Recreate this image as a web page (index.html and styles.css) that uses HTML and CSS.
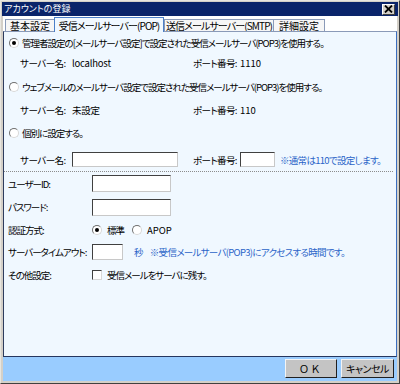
FILE: index.html
```html
<!DOCTYPE html>
<html lang="ja">
<head>
<meta charset="utf-8">
<title>アカウントの登録</title>
<link rel="stylesheet" href="styles.css">
</head>
<body>
<div class="window">
  <div class="titlebar">
    <span class="title">アカウントの登録</span>
    <span class="close"><svg width="9" height="8" viewBox="0 0 9 8"><path d="M1 0.5 L8 7.5 M8 0.5 L1 7.5" stroke="#000" stroke-width="1.8" fill="none"/></svg></span>
  </div>
  <div class="frame">
    <div class="tabs">
      <span class="tab t1">基本設定</span>
      <span class="tab t2 active">受信メールサーバー(POP)</span>
      <span class="tab t3">送信メールサーバー(SMTP)</span>
      <span class="tab t4">詳細設定</span>
    </div>
    <div class="panel">
      <div class="row r1"><span class="radio checked"></span><span>管理者設定の[メールサーバ設定]で設定された受信メールサーバ(POP3)を使用する。</span></div>
      <div class="sub r2"><span class="sl">サーバー名:</span><span class="sv">localhost</span><span class="pl">ポート番号:</span><span class="pv">1110</span></div>
      <div class="row r3"><span class="radio"></span><span>ウェブメールのメールサーバ設定で設定された受信メールサーバ(POP3)を使用する。</span></div>
      <div class="sub r4"><span class="sl">サーバー名:</span><span class="sv">未設定</span><span class="pl">ポート番号:</span><span class="pv">110</span></div>
      <div class="row r5"><span class="radio"></span><span>個別に設定する。</span></div>
      <div class="sub r6"><span class="sl">サーバー名:</span><span class="sv"><span class="input w-server"></span></span><span class="pl">ポート番号:</span><span class="input w-port"></span><span class="note">※通常は110で設定します。</span></div>
      <div class="sep"></div>
      <div class="frow r7"><span class="fl">ユーザーID:</span><span class="input w-user"></span></div>
      <div class="frow r8"><span class="fl">パスワード:</span><span class="input w-user"></span></div>
      <div class="frow r9"><span class="fl">認証方式:</span><span class="radio checked"></span><span class="opt">標準</span><span class="radio"></span><span class="opt latin">APOP</span></div>
      <div class="frow r10"><span class="fl">サーバータイムアウト:</span><span class="input w-time"></span><span class="note sec">秒</span><span class="note">※受信メールサーバ(POP3)にアクセスする時間です。</span></div>
      <div class="frow r11"><span class="fl">その他設定:</span><span class="check"></span><span class="opt">受信メールをサーバに残す。</span></div>
    </div>
    <div class="footer">
      <span class="btn ok">ＯＫ</span>
      <span class="btn">キャンセル</span>
    </div>
  </div>
</div>
</body>
</html>
```
FILE: styles.css
```css
html, body {
  margin: 0;
  padding: 0;
  background: #d4d0c8;
}
body {
  font-family: "Noto Sans CJK JP", sans-serif;
  font-size: 9.5px;
  letter-spacing: -1px;
  font-feature-settings: "palt";
  color: #000;
  white-space: nowrap;
}
.window {
  width: 400px;
  height: 384px;
  box-sizing: border-box;
  border: 1px solid;
  border-color: #e8e6e0 #404040 #404040 #e8e6e0;
  padding: 1px 1px 2px 1px;
  display: flex;
  flex-direction: column;
  background: #d4d0c8;
}
.titlebar {
  height: 14px;
  background: #0a246a;
  display: flex;
  align-items: center;
  justify-content: space-between;
  padding: 0 3px 0 2px;
  color: #fff;
}
.title {
  font-size: 9px;
  line-height: 12px;
  letter-spacing: 0;
}
.close {
  width: 11px;
  height: 9px;
  background: #d4d0c8;
  border: 1px solid;
  border-color: #fff #404040 #404040 #fff;
  display: flex;
  align-items: center;
  justify-content: center;
}
.frame {
  flex: 1;
  margin: 0 1px;
  display: flex;
  flex-direction: column;
  background: #fff;
}
.tabs {
  height: 15px;
  display: flex;
  align-items: flex-end;
  padding-left: 2px;
  background: #fff;
}
.tab {
  flex: none;
  height: 11px;
  line-height: 11px;
  border: 1px solid #8a9ab8;
  border-bottom: none;
  background: #f6f6f6;
  text-align: center;
  margin-right: -1px;
  font-size: 10px;
  letter-spacing: -0.9px;
}
.tab.active {
  height: 14px;
  line-height: 16px;
  background: #f0f8ff;
  border-color: #4b7fc8;
  position: relative;
  z-index: 1;
  margin-bottom: -1px;
}
.t1 { width: 48px; letter-spacing: 0; }
.t2 { width: 108px; }
.t3 { width: 108px; margin-left: 1px; }
.t4 { width: 50px; letter-spacing: 0; }
.panel {
  height: 326px;
  box-sizing: border-box;
  background: #f0f8ff;
  border: 1px solid;
  border-color: #8a9ab8 #3a6ec0 #26365e #2e3c5e;
  display: flex;
  flex-direction: column;
}
.row, .sub, .frow {
  display: flex;
  align-items: center;
}
.row > *, .sub > *, .frow > * { flex: none; }
.row { padding-left: 5px; }
.row .radio { margin-right: 3px; }
.r1 { height: 22px; }
.r2 { height: 18px; }
.r3 { height: 30px; }
.r4 { height: 16px; }
.r5 { height: 30px; }
.r6 { height: 23px; }
.sub { padding-left: 16px; }
.sl { width: 52px; letter-spacing: -0.5px; }
.sv { width: 121px; display: flex; letter-spacing: -0.2px; }
.pl { width: 47px; letter-spacing: -0.6px; }
.pv { letter-spacing: 0; }
.latin { letter-spacing: 0; }
.sep {
  border-top: 1px dotted #8c8c8c;
  margin: 0 3px 0 0;
  height: 0;
}
.frow { padding-left: 4px; }
.fl { width: 84px; }
.r7 { height: 23px; }
.r8 { height: 24px; }
.r9 { height: 21px; }
.r10 { height: 24px; }
.r11 { height: 22px; }
.radio {
  width: 8px;
  height: 8px;
  border-radius: 50%;
  background: #fff;
  border: 1px solid;
  border-color: #707070 #d8d8d8 #d8d8d8 #707070;
  display: inline-flex;
  align-items: center;
  justify-content: center;
}
.radio.checked::after {
  content: "";
  width: 4px;
  height: 4px;
  border-radius: 50%;
  background: #000;
}
.check {
  width: 8px;
  height: 8px;
  background: #fff;
  border: 1px solid;
  border-color: #404040 #d8d8d8 #d8d8d8 #404040;
}
.opt { margin-left: 5px; margin-right: 8px; }
.input {
  display: block;
  background: #fff;
  border: 1px solid;
  border-color: #404040 #c8c8c8 #c8c8c8 #404040;
  box-sizing: border-box;
}
.w-server { width: 106px; height: 15px; }
.w-port { width: 35px; height: 15px; }
.w-user { width: 79px; height: 17px; }
.w-time { width: 31px; height: 16px; }
.note {
  color: #2a64c8;
  margin-left: 5px;
  letter-spacing: -0.7px;
}
.note.sec { margin-left: 11px; margin-right: 2px; }
.footer {
  height: 24px;
  background: #99ccff;
  display: flex;
  justify-content: flex-end;
  align-items: flex-start;
  gap: 4px;
  padding: 2px 3px 0 0;
  box-sizing: border-box;
}
.btn {
  width: 53px;
  height: 19px;
  box-sizing: border-box;
  background: #c4c4c4;
  border: 1px solid;
  border-color: #f4f4f4 #202020 #202020 #f4f4f4;
  display: flex;
  align-items: center;
  justify-content: center;
  font-size: 10px;
  letter-spacing: -0.5px;
}
.btn.ok {
  width: 52px;
  letter-spacing: 3px;
}
```
